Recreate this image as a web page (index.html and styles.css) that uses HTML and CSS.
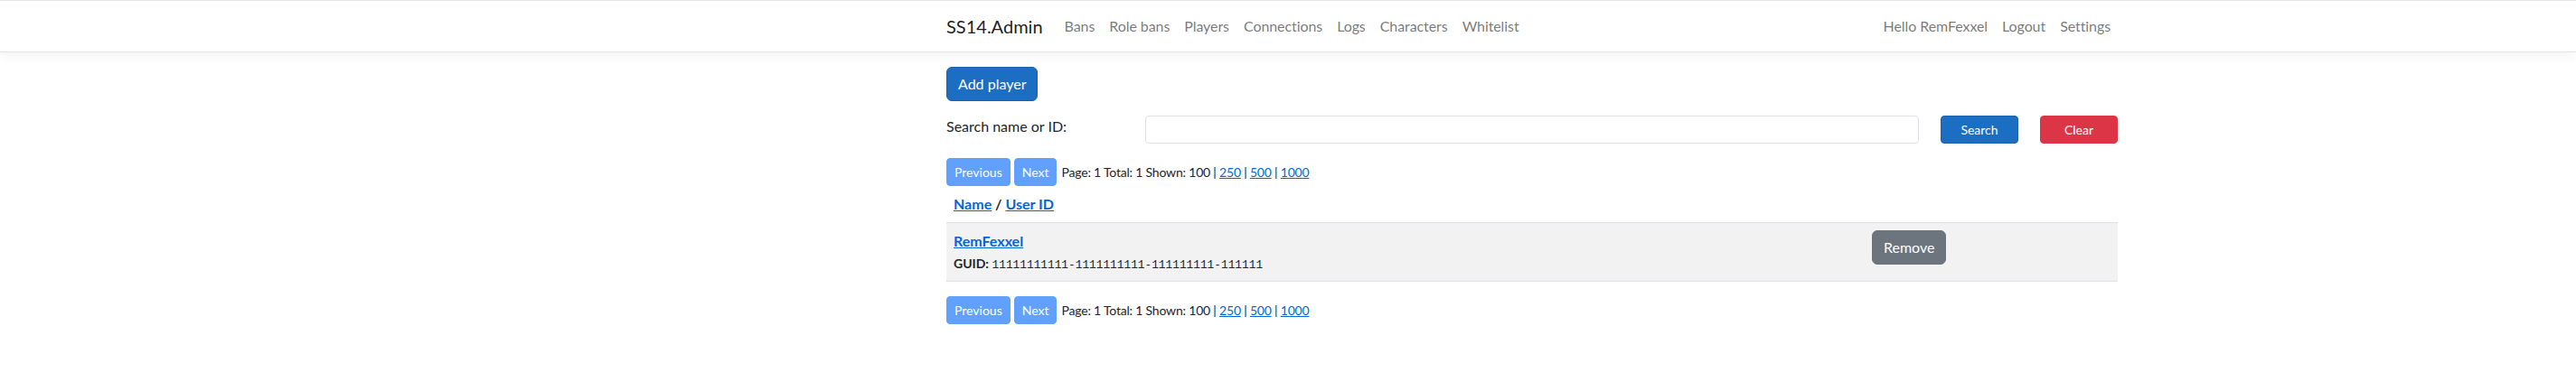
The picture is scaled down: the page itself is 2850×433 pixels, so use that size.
FILE: index.html
```html
<!DOCTYPE html>
<html lang="en">
<head>
<meta charset="utf-8">
<title>Players - SS14.Admin</title>
<link rel="stylesheet" href="styles.css">
</head>
<body>
<header>
  <nav class="navbar">
    <div class="container nav-inner">
      <a class="brand" href="#">SS14.Admin</a>
      <ul class="nav">
        <li><a class="nav-link" href="#">Bans</a></li>
        <li><a class="nav-link" href="#">Role bans</a></li>
        <li><a class="nav-link" href="#">Players</a></li>
        <li><a class="nav-link" href="#">Connections</a></li>
        <li><a class="nav-link" href="#">Logs</a></li>
        <li><a class="nav-link" href="#">Characters</a></li>
        <li><a class="nav-link" href="#">Whitelist</a></li>
      </ul>
      <ul class="nav nav-user">
        <li><span class="nav-link">Hello RemFexxel</span></li>
        <li><a class="nav-link" href="#">Logout</a></li>
        <li><a class="nav-link" href="#">Settings</a></li>
      </ul>
    </div>
  </nav>
</header>
<main class="container">
  <div class="actions">
    <a class="btn btn-primary" href="#">Add player</a>
  </div>
  <form class="search-row">
    <label class="search-label" for="search">Search name or ID:</label>
    <input class="search-input" id="search" type="text">
    <button class="btn btn-sm btn-primary btn-block" type="button">Search</button>
    <button class="btn btn-sm btn-danger btn-block" type="button">Clear</button>
  </form>
  <div class="pager">
    <span class="btn btn-sm btn-disabled">Previous</span>
    <span class="btn btn-sm btn-disabled">Next</span>
    <span class="pager-info">Page: 1 Total: 1 Shown: 100 | <a href="#">250</a> | <a href="#">500</a> | <a href="#">1000</a></span>
  </div>
  <table class="players">
    <thead>
      <tr>
        <th><a href="#">Name</a> / <a href="#">User ID</a></th>
        <th class="col-actions"></th>
      </tr>
    </thead>
    <tbody>
      <tr>
        <td>
          <a class="player-name" href="#">RemFexxel</a><br>
          <small><strong>GUID:</strong> <code>11111111111-1111111111-111111111-111111</code></small>
        </td>
        <td class="col-actions"><button class="btn btn-secondary" type="button">Remove</button></td>
      </tr>
    </tbody>
  </table>
  <div class="pager">
    <span class="btn btn-sm btn-disabled">Previous</span>
    <span class="btn btn-sm btn-disabled">Next</span>
    <span class="pager-info">Page: 1 Total: 1 Shown: 100 | <a href="#">250</a> | <a href="#">500</a> | <a href="#">1000</a></span>
  </div>
</main>
</body>
</html>
```
FILE: styles.css
```css
* { box-sizing: border-box; }

html, body { margin: 0; }

body {
  font-family: Lato, "Open Sans", sans-serif;
  font-size: 16px;
  line-height: 1.5;
  color: #212529;
  background: #fff;
}

a { color: #0366d6; }

.container {
  width: 1320px;
  padding: 0 12px;
  margin-left: 1035px;
}

/* Navbar */
.navbar {
  background: #fff;
  border-top: 1px solid #e5e5e5;
  border-bottom: 1px solid #e5e5e5;
  box-shadow: 0 4px 12px rgba(0, 0, 0, 0.05);
  padding: 8px 0;
  margin-bottom: 16px;
}

.nav-inner {
  display: flex;
  align-items: center;
}

.brand {
  font-size: 20px;
  line-height: 30px;
  padding: 5px 0;
  margin-right: 16px;
  color: rgba(0, 0, 0, 0.9);
  text-decoration: none;
}

.nav {
  display: flex;
  list-style: none;
  margin: 0;
  padding: 0;
}

.nav-user { margin-left: auto; }

.nav-link {
  display: block;
  padding: 8px;
  color: rgba(0, 0, 0, 0.55);
  text-decoration: none;
  letter-spacing: -0.08px;
}

/* Buttons */
.btn {
  display: inline-block;
  font-family: inherit;
  font-size: 16px;
  line-height: 24px;
  padding: 6px 12px;
  border: 1px solid transparent;
  border-radius: 6px;
  color: #fff;
  text-align: center;
  text-decoration: none;
  cursor: pointer;
}

.btn-sm {
  font-size: 14px;
  line-height: 21px;
  padding: 4px 8px;
  border-radius: 4px;
}

.btn-block { width: 100%; }

.btn-primary { background: #1b6ec2; border-color: #1861ac; }
.btn-danger { background: #dc3545; border-color: #dc3545; }
.btn-secondary { background: #6c757d; border-color: #6c757d; }
.btn-disabled { background: #0d6efd; border-color: #0d6efd; opacity: 0.65; cursor: default; }

.actions {
  display: flex;
  margin-bottom: 16px;
}

/* Search */
.search-row {
  display: grid;
  grid-template-columns: 196px 856px 86px 86px;
  column-gap: 24px;
  align-items: start;
  margin-bottom: 16px;
}

.search-label { line-height: 24px; }

.search-input {
  height: 31px;
  padding: 4px 8px;
  font-family: inherit;
  font-size: 14px;
  border: 1px solid #dee2e6;
  border-radius: 4px;
  background: #fff;
}

/* Pager */
.pager {
  display: flex;
  align-items: center;
  gap: 4px;
  font-size: 14px;
}

.pager-info {
  margin-left: 1px;
  letter-spacing: -0.2px;
}

/* Table */
.players {
  width: 100%;
  border-collapse: collapse;
  margin-bottom: 16px;
}

.players th,
.players td {
  padding: 8px;
  text-align: left;
  vertical-align: top;
  border-bottom: 1px solid #dee2e6;
}

.players th { font-weight: 700; }

.players tbody tr { background: #f2f2f2; }

.col-actions { width: 280px; }

.player-name { font-weight: 700; }

small { font-size: 14px; }

code {
  font-family: "Liberation Mono", monospace;
  font-size: 12.8px;
  color: #212529;
}
```
